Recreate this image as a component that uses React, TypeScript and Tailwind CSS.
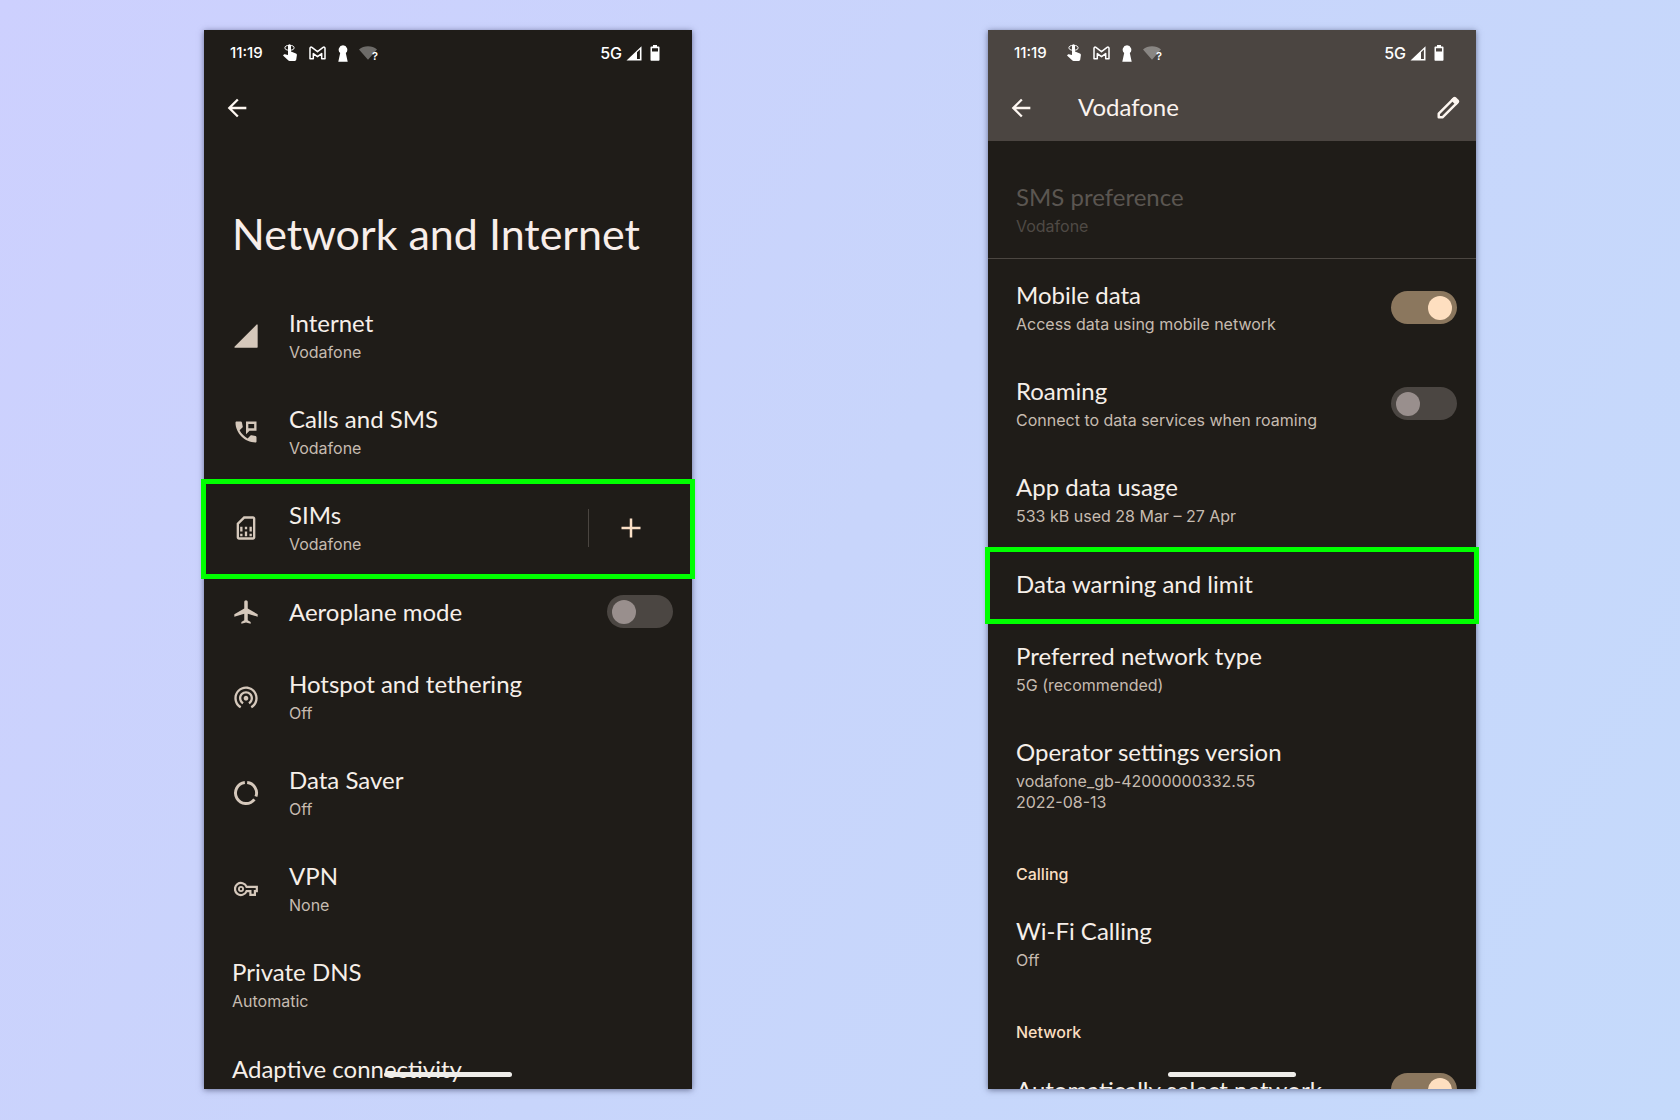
import React, { useState } from 'react';
import {
  MdArrowBack,
  MdAirplanemodeActive,
  MdOutlineSimCard,
  MdWifiTethering,
} from 'react-icons/md';

type SettingItem = {
  title: string;
  summary?: string[];
  icon?: React.ReactNode;
  toggle?: boolean;
  addAction?: boolean;
  highlighted?: boolean;
  disabled?: boolean;
};

/* ---------- icons ---------- */

const SignalIcon: React.FC = () => (
  <svg viewBox="0 0 24 24" className="size-7" fill="currentColor" aria-hidden="true">
    <path d="M2.5 22a.5.5 0 0 1-.35-.85l19-19a.5.5 0 0 1 .85.35V21.500a.5.5 0 0 1-.5.5z" />
  </svg>
);

const PhoneMessageIcon: React.FC = () => (
  <svg viewBox="0 0 24 24" className="size-7" fill="currentColor" aria-hidden="true">
    <path d="M3.900 3h3.600c.5 0 .9.350 1 .8l.7 3.400c.1.350 0 .7-.25.950L6.500 10.600c1.500 2.900 3.900 5.300 6.900 6.900l2.450-2.450c.25-.25.6-.35.95-.3l3.400.7c.5.1.8.5.8 1v3.650c0 .5-.4.9-.9.9C11 21 3 13 3 3.900c0-.5.4-.9.9-.9z" />
    <path fillRule="evenodd" d="M12 3h9v8h-6l-3 3zM14 5.200v3.600h5V5.200z" />
  </svg>
);

const DataSaverIcon: React.FC = () => (
  <svg viewBox="0 0 24 24" className="size-7" fill="none" stroke="currentColor" strokeWidth="2.500" aria-hidden="true">
    <path d="M13 3.050A9 9 0 0 1 20.500 15.100" />
    <path d="M19.200 17.400A9 9 0 1 1 11 3.050" />
  </svg>
);

const KeyIcon: React.FC = () => (
  <svg viewBox="0 0 24 24" className="size-6" fill="none" stroke="currentColor" strokeWidth="2.200" aria-hidden="true">
    <path d="M12.600 9.900h10.200v4.200h-1.900v3.800h-4.500v-3.800h-3.800a6 6 0 1 1 0-4.200z" />
    <circle cx="7" cy="12" r="2.100" strokeWidth="1.800" />
  </svg>
);

const PlusIcon: React.FC = () => (
  <svg viewBox="0 0 20 20" className="size-5" fill="none" stroke="currentColor" strokeWidth="2.500" aria-hidden="true">
    <path d="M10 .5v19M.5 10h19" />
  </svg>
);

const PencilIcon: React.FC = () => (
  <svg viewBox="0 0 24 24" className="size-7" aria-hidden="true">
    <path fill="none" stroke="currentColor" strokeWidth="2.100" strokeLinejoin="round" d="M4.050 19.950v-3.200L16.700 4.100l3.200 3.200L7.250 19.950z" />
    <path fill="currentColor" d="M14.300 5.100l4.600 4.600 2.300-2.300a1.600 1.600 0 0 0 0-2.200l-2.400-2.400a1.600 1.600 0 0 0-2.200 0z" />
  </svg>
);

const TouchIcon: React.FC = () => (
  <svg viewBox="0 0 16 18" className="h-[18px] w-4" aria-hidden="true">
    <ellipse cx="7.500" cy="3.800" rx="4.600" ry="2.400" fill="none" stroke="currentColor" strokeWidth="1" />
    <path fill="currentColor" d="M6 1.800a1.500 1.500 0 0 1 3 0V7.500l4.900 1.900c.7.300 1.100.9 1 1.600l-.7 4.800c-.1.700-.7 1.200-1.400 1.200H7.600c-.5 0-.9-.2-1.200-.5L1 11.400l.9-.9c.3-.3.700-.4 1.100-.3L6 11z" />
  </svg>
);

const MailIcon: React.FC = () => (
  <svg viewBox="0 0 18 14" className="h-[14px] w-[18px]" fill="none" stroke="currentColor" strokeWidth="1.500" strokeLinejoin="round" aria-hidden="true">
    <path d="M1 12.800V2.200c0-1 1.100-1.400 1.900-.8L8.500 5.700l5.600-4.300c.8-.6 1.900-.2 1.900.8v10.600h-3.300V7.600L8.500 10.700 4.300 7.600v5.200z" />
  </svg>
);

const KeyholeIcon: React.FC = () => (
  <svg viewBox="0 0 10 17" className="h-[17px] w-[10px]" fill="currentColor" aria-hidden="true">
    <path d="M5 .3a4.400 4.400 0 0 1 2.800 7.700L9.700 16.700H.3L2.200 8A4.400 4.400 0 0 1 5 .3z" />
  </svg>
);

const WifiUnknownIcon: React.FC = () => (
  <span className="relative block">
    <svg viewBox="0 0 18 14" className="h-[14px] w-[18px] text-white/35" fill="currentColor" aria-hidden="true">
      <path d="M0 3.500C2.500 1.300 5.600.2 9 .2s6.500 1.100 9 3.300L9 13.800z" />
    </svg>
    <span className="absolute -right-px top-1 font-['Inter',sans-serif] text-[11px] leading-3 font-semibold">?</span>
  </span>
);

const SignalBarsIcon: React.FC = () => (
  <svg viewBox="0 0 16 15" className="h-[15px] w-4" aria-hidden="true">
    <path fill="currentColor" fillRule="evenodd" d="M.5 14.500 15.500.3v14.200zM11 6.300v6.700h2.900V3.600z" />
  </svg>
);

const BatteryIcon: React.FC = () => (
  <svg viewBox="0 0 10 16" className="h-4 w-[10px]" aria-hidden="true">
    <path
      fill="currentColor"
      fillRule="evenodd"
      d="M3 0h4v1.600h1.500c.6 0 1 .4 1 1V14.800c0 .6-.4 1-1 1h-7c-.6 0-1-.4-1-1V2.600c0-.6.4-1 1-1H3zM2 3.200v3.200h6V3.200z"
    />
  </svg>
);

/* ---------- data ---------- */

const NETWORK_ITEMS: SettingItem[] = [
  { title: 'Internet', summary: ['Vodafone'], icon: <SignalIcon /> },
  { title: 'Calls and SMS', summary: ['Vodafone'], icon: <PhoneMessageIcon /> },
  { title: 'SIMs', summary: ['Vodafone'], icon: <MdOutlineSimCard className="size-7" />, addAction: true, highlighted: true },
  { title: 'Aeroplane mode', icon: <MdAirplanemodeActive className="size-7" />, toggle: false },
  { title: 'Hotspot and tethering', summary: ['Off'], icon: <MdWifiTethering className="size-7" /> },
  { title: 'Data Saver', summary: ['Off'], icon: <DataSaverIcon /> },
  { title: 'VPN', summary: ['None'], icon: <KeyIcon /> },
  { title: 'Private DNS', summary: ['Automatic'] },
];

const DATA_ITEMS: SettingItem[] = [
  { title: 'Mobile data', summary: ['Access data using mobile network'], toggle: true },
  { title: 'Roaming', summary: ['Connect to data services when roaming'], toggle: false },
  { title: 'App data usage', summary: ['533 kB used 28 Mar – 27 Apr'] },
  { title: 'Data warning and limit', highlighted: true },
  { title: 'Preferred network type', summary: ['5G (recommended)'] },
  { title: 'Operator settings version', summary: ['vodafone_gb-42000000332.55', '2022-08-13'] },
];

/* ---------- building blocks ---------- */

const StatusBar: React.FC = () => (
  <div className="flex h-[46px] items-center justify-between pr-8 pl-[26px] text-white">
    <div className="flex items-center">
      <span className="w-[52px] font-['Inter',sans-serif] text-[15px] leading-5 font-medium">11:19</span>
      <div className="flex items-center gap-[11px]">
        <TouchIcon />
        <MailIcon />
        <KeyholeIcon />
        <WifiUnknownIcon />
      </div>
    </div>
    <div className="flex items-center">
      <span className="mr-1 font-['Inter',sans-serif] text-base leading-5 font-medium">5G</span>
      <SignalBarsIcon />
      <span className="ml-2">
        <BatteryIcon />
      </span>
    </div>
  </div>
);

const BackButton: React.FC = () => (
  <button type="button" aria-label="Navigate up" className="text-[#fdf6f0]">
    <MdArrowBack className="size-7" />
  </button>
);

const Toggle: React.FC<{ id: string; initial: boolean }> = ({ id, initial }) => {
  const [on, setOn] = useState(initial);
  return (
    <input
      id={id}
      type="checkbox"
      role="switch"
      checked={on}
      onChange={() => setOn(!on)}
      className="flex h-[33px] w-[66px] shrink-0 cursor-pointer appearance-none items-center rounded-full bg-[#4b4642] px-[5px] before:size-6 before:rounded-full before:bg-[#998f8d] checked:bg-[#8b775e] checked:before:translate-x-8 checked:before:bg-[#fedfc0]"
    />
  );
};

const SettingRow: React.FC<{ item: SettingItem }> = ({ item }) => {
  const { title, summary, icon, toggle, addAction, highlighted, disabled } = item;
  const id = title.toLowerCase().replace(/\s+/g, '-');

  const text = (
    <>
      {icon && <span className="flex w-7 shrink-0 justify-center text-[#d5c8bb]">{icon}</span>}
      <span className="flex flex-col">
        <span className={`font-['Lato',sans-serif] text-2xl leading-[30px] ${disabled ? 'text-[#5b5651]' : 'text-[#f6efe9]'}`}>{title}</span>
        {summary && (
          <span className={`mt-1 flex flex-col font-['Inter',sans-serif] text-base leading-[21px] ${disabled ? 'text-[#4f4a45]' : 'text-[#c6bbb0]'}`}>
            {summary.map((line) => (
              <span key={line}>{line}</span>
            ))}
          </span>
        )}
      </span>
    </>
  );

  return (
    <li className={`relative flex items-center justify-between pr-[19px] pl-7 ${summary ? 'pt-5 pb-[21px]' : 'h-[73px] pb-0.5'}`}>
      {toggle !== undefined ? (
        <>
          <label htmlFor={id} className="flex grow cursor-pointer items-center gap-[29px]">{text}</label>
          <Toggle id={id} initial={toggle} />
        </>
      ) : (
        <button type="button" disabled={disabled} className="flex grow items-center gap-[29px] text-left">{text}</button>
      )}
      {addAction && (
        <div className="flex h-[38px] items-center border-l border-[#4a4540] px-8">
          <button type="button" aria-label="Add SIM" className="text-[#fbe0c6]">
            <PlusIcon />
          </button>
        </div>
      )}
      {highlighted && <span className="pointer-events-none absolute -inset-x-[3px] -top-px -bottom-[3px] border-5 border-[#00ff00]" />}
    </li>
  );
};

const SectionHeading: React.FC<{ children: React.ReactNode }> = ({ children }) => (
  <h2 className="px-7 pt-[30px] pb-[11px] font-['Inter',sans-serif] text-base leading-[21px] font-medium text-[#f9dec1]">{children}</h2>
);

const Phone: React.FC<{ children: React.ReactNode }> = ({ children }) => (
  <section className="relative w-full max-w-[488px] bg-[#1f1c18] shadow-[0_1px_6px_rgba(40,45,80,0.6)]">
    {children}
    <div className="absolute bottom-3 left-1/2 h-[5px] w-32 -translate-x-1/2 rounded-full bg-[#efedea]" />
  </section>
);

/* ---------- screens ---------- */

const NetworkScreen: React.FC = () => (
  <Phone>
    <header>
      <StatusBar />
      <div className="flex h-16 items-center px-[19px]">
        <BackButton />
      </div>
      <h1 className="px-7 pt-[67px] pb-[27px] font-['Lato',sans-serif] text-[43px] leading-[54px] text-[#f8eeea]">Network and Internet</h1>
    </header>
    <ul>
      {NETWORK_ITEMS.map((item) => (
        <SettingRow key={item.title} item={item} />
      ))}
    </ul>
    <ul className="h-14 overflow-hidden">
      <SettingRow item={{ title: 'Adaptive connectivity' }} />
    </ul>
  </Phone>
);

const OperatorScreen: React.FC = () => (
  <Phone>
    <header className="bg-[#4b4541] pb-px">
      <StatusBar />
      <div className="flex h-16 items-center pr-[14px] pl-[19px]">
        <BackButton />
        <h1 className="grow pb-0.5 pl-[43px] font-['Lato',sans-serif] text-2xl leading-[30px] text-[#fbf3ee]">Vodafone</h1>
        <button type="button" aria-label="Edit SIM name" className="text-[#fdf6f0]">
          <PencilIcon />
        </button>
      </div>
    </header>
    <ul className="border-b border-[#4b4641] pt-[21px]">
      <SettingRow item={{ title: 'SMS preference', summary: ['Vodafone'], disabled: true }} />
    </ul>
    <ul className="pt-px">
      {DATA_ITEMS.map((item) => (
        <SettingRow key={item.title} item={item} />
      ))}
    </ul>
    <SectionHeading>Calling</SectionHeading>
    <ul>
      <SettingRow item={{ title: 'Wi-Fi Calling', summary: ['Off'] }} />
    </ul>
    <SectionHeading>Network</SectionHeading>
    <ul className="h-[35px] overflow-hidden">
      <SettingRow item={{ title: 'Automatically select network', toggle: true }} />
    </ul>
  </Phone>
);

const App: React.FC = () => (
  <main className="min-h-screen bg-linear-[120deg] from-[#cdd0fe] via-[#c8d5fb] to-[#c5dafb] px-14 py-[30px]">
    <div className="grid grid-cols-2 items-start justify-items-center">
      <NetworkScreen />
      <OperatorScreen />
    </div>
  </main>
);

export default App;
